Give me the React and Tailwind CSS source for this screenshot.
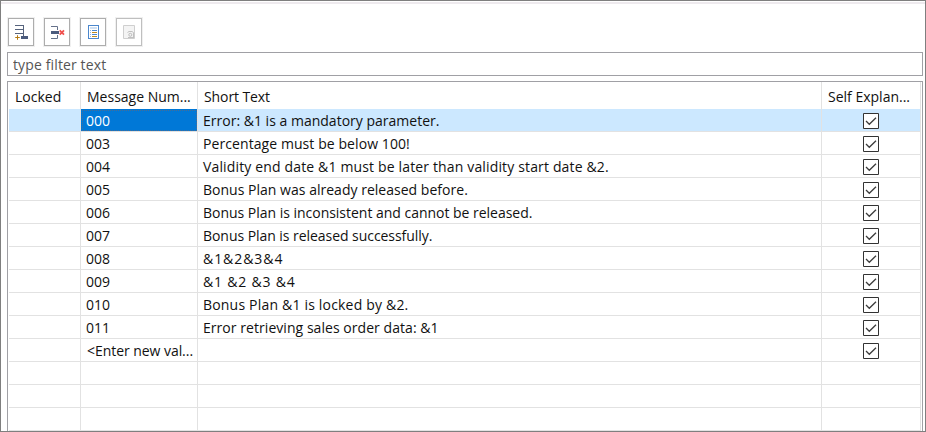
const rows = [
  ['000', 'Error: &1 is a mandatory parameter.', 'tracking-[0.01px]'],
  ['003', 'Percentage must be below 100!', 'tracking-[0.08px]'],
  ['004', 'Validity end date &1 must be later than validity start date &2.', 'tracking-[0.15px]'],
  ['005', 'Bonus Plan was already released before.', 'tracking-[0.02px]'],
  ['006', 'Bonus Plan is inconsistent and cannot be released.', 'tracking-[-0.02px]'],
  ['007', 'Bonus Plan is released successfully.', 'tracking-[-0.05px]'],
  ['008', '&1&2&3&4', 'tracking-[0.95px]'],
  ['009', '&1 &2 &3 &4', 'tracking-[0.8px]'],
  ['010', 'Bonus Plan &1 is locked by &2.', 'tracking-[0.19px]'],
  ['011', 'Error retrieving sales order data: &1', 'tracking-[0.05px]'],
  ['<Enter new val...', '', ''],
  null,
  null,
  null,
];

const columns = 'grid grid-cols-[72px_117px_624px_99px]';

function ToolButton({ label, disabled, children }) {
  return (
    <button
      aria-label={label}
      disabled={disabled}
      className={`flex h-7 w-[26px] items-center justify-center border bg-white outline outline-[#f0f0f0] ${
        disabled ? 'border-[#bfbfbf]' : 'border-[#adadad]'
      }`}
    >
      {children}
    </button>
  );
}

function InsertIcon() {
  return (
    <svg width="16" height="16" viewBox="0 0 16 16" className="shrink-0" shapeRendering="crispEdges">
      <path d="M2 1.5h9M2 5.5h9M2 9.5h9M10.5 1v11" stroke="#56637d" fill="none" />
      <path d="M8 12h7v3H8z" fill="#4b5b7d" />
      <path d="M2 13.5h5M4.5 11v5" stroke="#c9973f" fill="none" />
      <path d="M3 13h3v1H3zM4 12h1v3H4z" fill="#b37a14" />
    </svg>
  );
}

function DeleteIcon() {
  return (
    <svg width="16" height="16" viewBox="0 0 16 16" className="shrink-0">
      <path d="M2 2.5h6.500V6M2 14.500h6.500V11" stroke="#65718a" fill="none" />
      <path d="M2 7h8v3H2z" fill="#4b5b7d" />
      <path d="M10.700 6.300l4.300 4.400M15 6.300l-4.300 4.400" stroke="#f0504d" strokeWidth="1.800" />
    </svg>
  );
}

function TextIcon() {
  return (
    <svg width="16" height="16" viewBox="0 0 16 16" className="shrink-0" shapeRendering="crispEdges">
      <path d="M3.5 1.5h10v13h-10z" fill="#fff" stroke="#4b87cd" />
      <path d="M5 3h7v2H5z" fill="#cfe0f3" />
      <path d="M5 6.5h1M5 8.5h1M5 10.5h1M5 12.5h1" stroke="#8fb4e0" />
      <path d="M7 6.5h5M7 10.5h5" stroke="#4b87cd" />
      <path d="M7 8.500h5M7 12.500h5" stroke="#bd8b20" />
    </svg>
  );
}

function PreviewIcon() {
  return (
    <svg width="16" height="16" viewBox="0 0 16 16" className="shrink-0">
      <path d="M2.5 1.5h11v13h-11z" fill="#f4f4f4" stroke="#cfcfcf" />
      <path d="M6.500 8.500L8 7.500h3l1.500 1v5M7 13.500h6" fill="none" stroke="#c0c0c0" />
      <circle cx="9.300" cy="10.800" r="1.500" fill="none" stroke="#bcbcbc" />
    </svg>
  );
}

function Checkbox() {
  return (
    <svg width="16" height="16" viewBox="0 0 16 16">
      <path d="M.5.5h15v15H.5z" fill="#fff" stroke="#333" />
      <path d="M3 8l3.300 3.300L13 4.700" fill="none" stroke="#3c3c3c" strokeWidth="1.300" />
    </svg>
  );
}

export default function App() {
  return (
    <div className="flex h-[432px] w-[926px] flex-col overflow-hidden border border-[#7f7f7f] bg-white font-['Open_Sans','Noto_Sans',sans-serif] text-[14px] text-[#111]">
      <div className="mt-px h-0.5 shrink-0 bg-[#eeeaee]" />
      <div className="mt-3.5 ml-[7px] flex shrink-0 gap-2.5">
        <ToolButton label="Insert"><InsertIcon /></ToolButton>
        <ToolButton label="Delete"><DeleteIcon /></ToolButton>
        <ToolButton label="Long text"><TextIcon /></ToolButton>
        <ToolButton label="Preview" disabled><PreviewIcon /></ToolButton>
      </div>
      <input
        className="mt-1.5 ml-1.5 h-6 w-[916px] shrink-0 border border-[#a0a0a5] px-[5px] tracking-[0.13px] text-[#555] outline-none placeholder:text-[#555] placeholder:opacity-100"
        placeholder="type filter text"
      />
      <div className="mt-[5px] ml-1.5 h-[350px] w-[916px] shrink-0 border border-b-0 border-[#a0a0a5] pl-px">
        <div className={`${columns} h-[27px] leading-[29px] whitespace-nowrap *:border-r *:border-[#e2e2e2]`}>
          <div className="pl-1.5">Locked</div>
          <div className="pl-1.5">Message Num...</div>
          <div className="pl-1.5 tracking-[-0.1px]">Short Text</div>
          <div className="pl-1.5">Self Explan...</div>
        </div>
        {rows.map((row, i) => (
          <div
            key={i}
            className={`${columns} h-[23px] w-[912px] leading-[20px] whitespace-nowrap *:border-r *:border-b *:border-[#e2e2e2] ${
              i === 0 ? 'bg-[#cce8ff]' : ''
            }`}
          >
            <div />
            <div
              className={`pt-0.5 ${i === 10 ? 'pl-1.5 tracking-[-0.05px]' : 'pl-[5px]'} ${
                i === 0 ? 'bg-[#0078d7] bg-clip-padding text-white outline-1 -outline-offset-2 outline-dotted outline-[#496d93]' : ''
              }`}
            >
              {row && row[0]}
            </div>
            <div className="pt-0.5 pl-[5px]">{row && <span className={row[2]}>{row[1]}</span>}</div>
            <div className="flex items-center justify-center pt-px">{row && <Checkbox />}</div>
          </div>
        ))}
      </div>
    </div>
  );
}
